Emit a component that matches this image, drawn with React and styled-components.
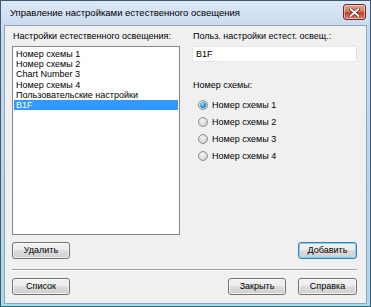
import React from 'react'
import styled, { createGlobalStyle } from 'styled-components'

const GlobalStyle = createGlobalStyle`
  html, body {
    margin: 0;
    padding: 0;
    background: #ffffff;
  }
  * {
    box-sizing: border-box;
  }
`

const Window = styled.div`
  width: 371px;
  height: 307px;
  display: flex;
  flex-direction: column;
  border: 1px solid #3e5a78;
  border-bottom-color: #2f6f7f;
  background: linear-gradient(#dce7f5, #c7d8ee 30px, #bcd3ea 60%, #a8dbe6);
  font-family: 'Liberation Sans', Arial, sans-serif;
  font-size: 9px;
  color: #000;
`

const TitleBar = styled.div`
  height: 25px;
  display: flex;
  align-items: center;
  justify-content: space-between;
  padding: 0 4px 2px 9px;
`

const Title = styled.span`
  font-size: 9.5px;
  color: #000;
`

const CloseButton = styled.div`
  width: 23px;
  height: 16px;
  border: 1px solid #6b2a22;
  border-radius: 3px;
  display: flex;
  align-items: center;
  justify-content: center;
  background: linear-gradient(#e8a493, #d77a66 45%, #c0432c 55%, #d5806a);
  box-shadow: inset 0 0 0 1px rgba(255, 255, 255, 0.45);
`

const Client = styled.div`
  flex: 1;
  margin: 0 3px 2px 3px;
  border: 1px solid #8fa6bf;
  background: #f0f0f0;
  padding: 4px 9px 8px 7px;
  display: flex;
  flex-direction: column;
`

const Columns = styled.div`
  display: grid;
  grid-template-columns: 168px 1fr;
  column-gap: 12px;
`

const Column = styled.div`
  display: flex;
  flex-direction: column;
`

const Label = styled.div`
  line-height: 12px;
  height: 12px;
  margin: ${p => p.$margin || '0 0 4px 1px'};
  white-space: nowrap;
`

const ListBox = styled.div`
  height: 189px;
  background: #fff;
  border: 1px solid #828790;
  padding: 2px 1px 0 1px;
`

const ListItem = styled.div`
  height: 10.2px;
  line-height: 10.2px;
  padding-left: 2px;
  white-space: nowrap;
  background: ${p => (p.$selected ? '#3399ff' : 'transparent')};
  color: ${p => (p.$selected ? '#fff' : '#000')};
`

const TextBox = styled.div`
  height: 16px;
  background: #fff;
  border: 1px solid #abadb3;
  border-top-color: #e3e9ef;
  border-left-color: #e2e3ea;
  border-right-color: #dbdfe6;
  border-bottom-color: #e3e9ef;
  padding: 0 3px;
  line-height: 14px;
`

const RadioGroup = styled.div`
  display: flex;
  flex-direction: column;
  gap: 4px;
  padding-left: 6px;
  margin-top: 7px;
`

const RadioRow = styled.div`
  display: flex;
  align-items: center;
  gap: 4px;
  height: 13px;
`

const RadioCircle = styled.span`
  width: 10px;
  height: 10px;
  border-radius: 50%;
  border: 1px solid #8e8f8f;
  background: radial-gradient(circle at 40% 35%, #f4f4f4, #d4d4d4 70%, #bdbdbd);
  display: flex;
  align-items: center;
  justify-content: center;
  &::after {
    content: '';
    display: ${p => (p.$checked ? 'block' : 'none')};
    width: 6px;
    height: 6px;
    border-radius: 50%;
    background: radial-gradient(circle at 40% 35%, #9fe0ff, #1a8ad3 60%, #0a5a9a);
  }
`

const ButtonRow = styled.div`
  display: flex;
  align-items: center;
  gap: 12px;
  margin-top: ${p => p.$top || '7px'};
`

const Spacer = styled.div`
  flex: 1;
`

const Button = styled.div`
  width: ${p => p.$w || '58px'};
  height: 17px;
  border: 1px solid ${p => (p.$default ? '#3c7fb1' : '#707070')};
  border-radius: 3px;
  background: linear-gradient(#f2f2f2, #ebebeb 49%, #dddddd 50%, #cfcfcf);
  box-shadow: ${p =>
    p.$default ? 'inset 0 0 0 1px #7ad3f5' : 'inset 0 0 0 1px rgba(255,255,255,0.7)'};
  display: flex;
  align-items: center;
  justify-content: center;
  line-height: 1;
`

const Separator = styled.div`
  margin-top: 10px;
  height: 2px;
  border-top: 1px solid #a0a0a0;
  border-bottom: 1px solid #ffffff;
`

const items = [
  'Номер схемы 1',
  'Номер схемы 2',
  'Chart Number 3',
  'Номер схемы 4',
  'Пользовательские настройки',
  'B1F',
]

const radios = ['Номер схемы 1', 'Номер схемы 2', 'Номер схемы 3', 'Номер схемы 4']

const App = () => {
  return (
    <>
      <GlobalStyle />
      <Window>
        <TitleBar>
          <Title>Управление настройками естественного освещения</Title>
          <CloseButton>
            <svg width="11" height="9" viewBox="0 0 11 9">
              <path d="M1.5 1 L9.5 8 M9.5 1 L1.5 8" stroke="#5a1a12" strokeWidth="3.2" strokeLinecap="round" />
              <path d="M1.5 1 L9.5 8 M9.5 1 L1.5 8" stroke="#fff" strokeWidth="1.9" strokeLinecap="round" />
            </svg>
          </CloseButton>
        </TitleBar>
        <Client>
          <Columns>
            <Column>
              <Label>Настройки естественного освещения:</Label>
              <ListBox>
                {items.map((it, i) => (
                  <ListItem key={i} $selected={i === items.length - 1}>
                    {it}
                  </ListItem>
                ))}
              </ListBox>
            </Column>
            <Column>
              <Label>Польз. настройки естест. освещ.:</Label>
              <TextBox>B1F</TextBox>
              <Label $margin="17px 0 0 1px">Номер схемы:</Label>
              <RadioGroup>
                {radios.map((r, i) => (
                  <RadioRow key={i}>
                    <RadioCircle $checked={i === 0} />
                    <span>{r}</span>
                  </RadioRow>
                ))}
              </RadioGroup>
            </Column>
          </Columns>
          <ButtonRow>
            <Button>Удалить</Button>
            <Spacer />
            <Button $default $w="59px">Добавить</Button>
          </ButtonRow>
          <Separator />
          <ButtonRow $top="7px">
            <Button>Список</Button>
            <Spacer />
            <Button>Закрыть</Button>
            <Button $w="59px">Справка</Button>
          </ButtonRow>
        </Client>
      </Window>
    </>
  )
}

export default App
